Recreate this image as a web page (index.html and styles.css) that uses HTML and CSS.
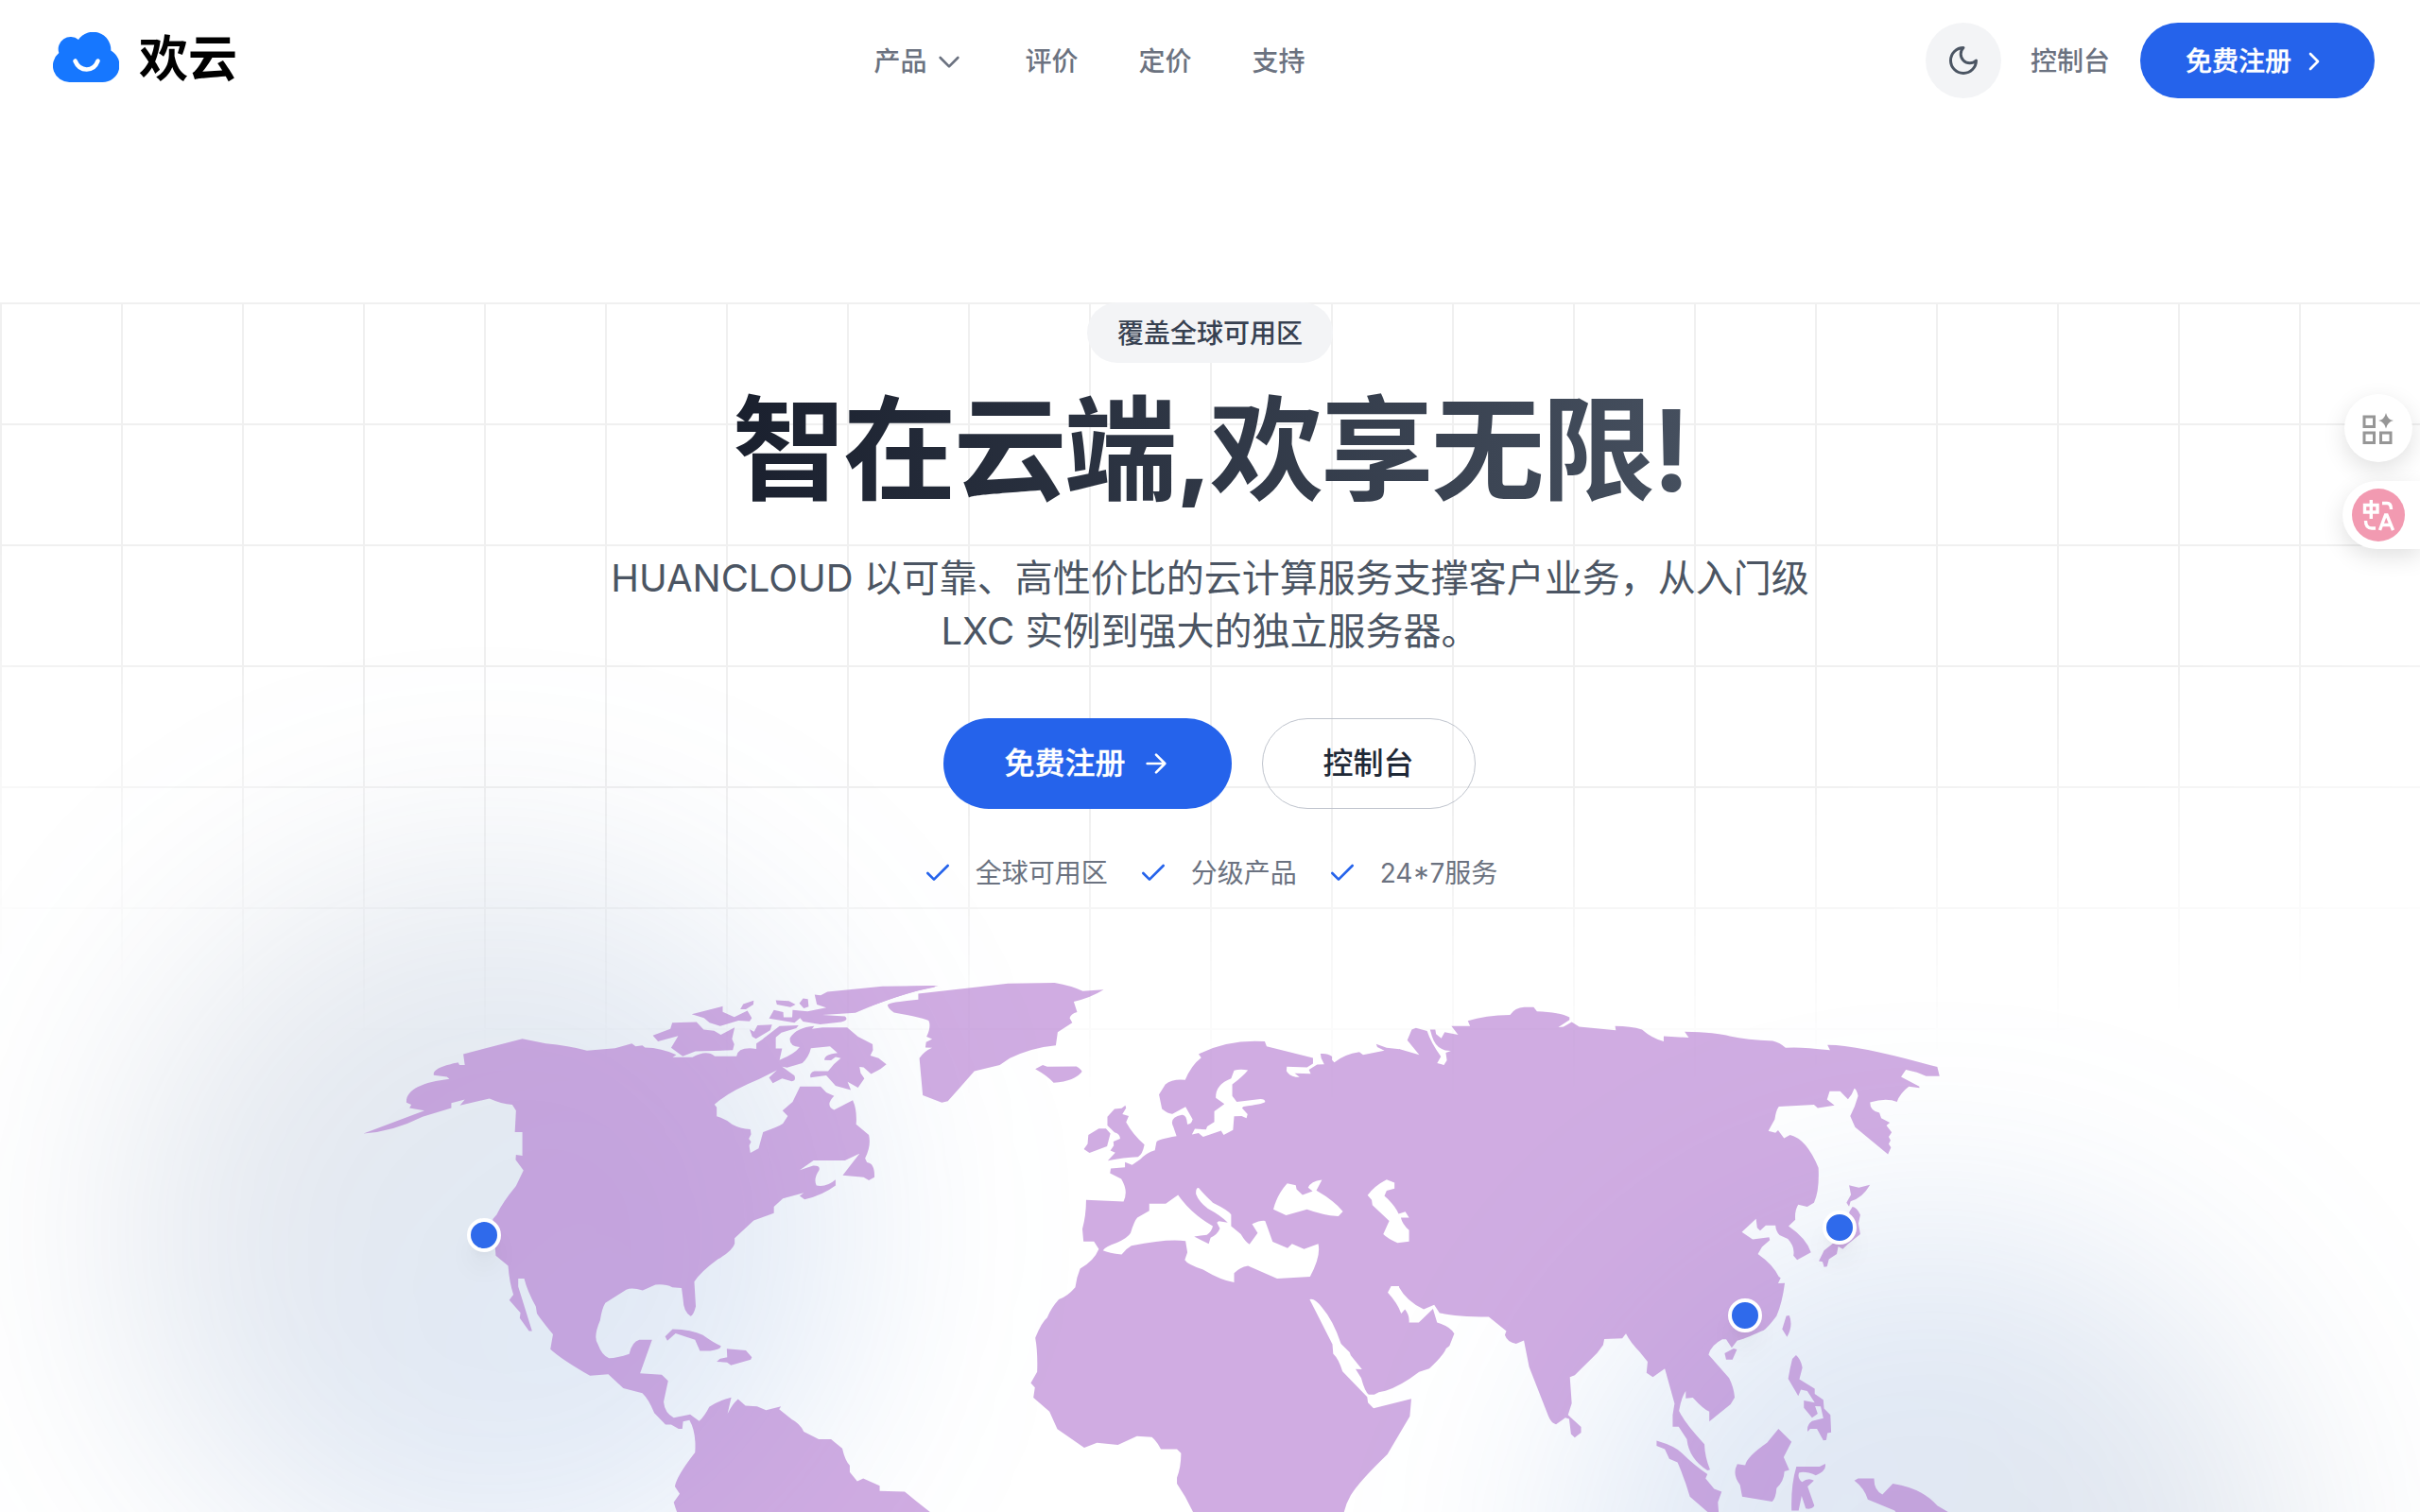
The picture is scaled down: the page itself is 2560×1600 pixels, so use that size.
FILE: index.html
```html
<!DOCTYPE html>
<html lang="zh-CN">
<head>
<meta charset="utf-8">
<title>欢云</title>
<link rel="stylesheet" href="styles.css">
</head>
<body>
<header class="header">
  <a class="brand">
    <svg class="brand-mark" viewBox="0 0 70 53"><path fill="#1677ff" d="M17.500 53A17.500 17.500 0 0 1 6.300 22A13 13 0 0 1 27 8A18.800 18.800 0 0 1 61.300 19.500A17.900 17.900 0 0 1 52.500 53Z"/><path d="M23.500 30.500C28.500 42.500 43 42.500 47.500 30.500" fill="none" stroke="#fff" stroke-width="4.600" stroke-linecap="round"/></svg>
    <span class="brand-name">欢云</span>
  </a>
  <nav class="nav">
    <a class="nav-link">产品<svg class="icon" viewBox="0 0 24 24"><path d="M19 9l-7 7-7-7"/></svg></a>
    <a class="nav-link">评价</a>
    <a class="nav-link">定价</a>
    <a class="nav-link">支持</a>
  </nav>
  <div class="actions">
    <button class="theme-toggle"><svg class="icon icon-moon" viewBox="0 0 24 24"><path d="M12 3a6 6 0 0 0 9 9 9 9 0 1 1-9-9Z"/></svg></button>
    <a class="nav-link">控制台</a>
    <a class="btn btn-small">免费注册<svg class="icon" viewBox="0 0 24 24"><path d="m9 18 6-6-6-6"/></svg></a>
  </div>
</header>

<main class="hero">
  <div class="grid-lines"></div>
  <div class="glow glow-left"></div>
  <div class="glow glow-right"></div>
  <div class="hero-copy">
    <span class="badge">覆盖全球可用区</span>
    <h1 class="title">智在云端,欢享无限!</h1>
    <p class="subtitle">HUANCLOUD 以可靠、高性价比的云计算服务支撑客户业务，从入门级 LXC 实例到强大的独立服务器。</p>
    <div class="cta">
      <a class="btn btn-large">免费注册<svg class="icon" viewBox="0 0 24 24"><path d="M5 12h14M12 5l7 7-7 7"/></svg></a>
      <a class="btn btn-outline">控制台</a>
    </div>
    <ul class="features">
      <li><svg class="icon" viewBox="0 0 24 24"><path d="M20 6 9 17l-5-5"/></svg>全球可用区</li>
      <li><svg class="icon" viewBox="0 0 24 24"><path d="M20 6 9 17l-5-5"/></svg>分级产品</li>
      <li><svg class="icon" viewBox="0 0 24 24"><path d="M20 6 9 17l-5-5"/></svg>24*7服务</li>
    </ul>
  </div>
  <div class="map">
    <svg class="map-land" viewBox="0 1000 2560 600">
      <!-- Inland seas, cut out of the land -->
      <mask id="seas" maskUnits="userSpaceOnUse" x="0" y="1000" width="2560" height="600">
        <rect x="0" y="1000" width="2560" height="600" fill="#fff"/>
        <g fill="#000" transform="translate(920 1020) scale(.39541 .3699)">
          <path d="M862 488L870 472L900 474L903 465L922 452V422L949 401L926 383Q925 345 967 328L975 305Q990 300 1012 304Q1000 320 970 345V378L982 395L1040 387Q1058 385 1058 395Q1050 402 1000 408L996 412L1011 430L1008 441L995 435L975 436L972 475L947 489L940 477L892 495L880 484Z"/>
          <path d="M624 820Q630 808 660 798Q690 785 698 770Q708 735 716 726L748 706V686H792L825 661Q860 715 918 750Q915 765 902 775L868 780L907 801L912 783Q930 775 937 757L929 740L934 736L958 740Q940 720 905 700Q880 680 873 658Q872 640 880 641Q895 660 918 683Q960 705 967 717V750L993 773Q1005 795 1016 802L1038 770L1023 744Q1045 733 1058 735Q1065 755 1078 795L1118 813L1130 801L1162 816L1200 801Q1208 835 1178 895L1090 900L1012 864Q990 868 975 885V911Q940 905 893 875Q850 860 843 847L850 825L845 793Q800 785 700 806Q685 815 674 831Q640 828 624 820Z"/>
          <path d="M1080 702Q1090 660 1117 628L1140 633L1142 645L1158 661L1185 650L1173 640Q1180 622 1210 618L1195 648Q1240 675 1266 708L1254 722Q1210 718 1170 702L1114 719Z"/>
          <path d="M1332 662Q1350 635 1383 617L1404 626V643L1383 649L1377 664Q1405 690 1415 715L1433 709L1443 726H1421Q1425 745 1443 762V794L1412 798Q1385 785 1374 773L1390 735L1345 690L1343 675Z"/>
        </g>
      </mask>
      <g mask="url(#seas)">
      <!-- Americas -->
      <g transform="translate(360 1020) scale(.39541 .3699)">
        <path d="M62 485L225 420L185 412L190 403L177 397C174 360 220 338 292 329L285 323L250 318C246 298 290 288 315 282L319 289L333 289L329 258L487 214L550 228Q610 234 660 248L735 241L780 228L790 236L808 233L815 239Q860 240 899 260L889 267H942Q980 244 1002 264H1060Q1064 236 1113 243V228L1165 190V242H1182L1175 275Q1215 258 1229 238Q1200 235 1203 212Q1220 182 1268 178L1262 186L1290 182H1356L1385 208L1424 230L1425 247L1418 262L1440 270L1461 287L1445 301L1420 315L1400 296L1389 295L1392 312L1402 328L1385 354L1357 337L1366 361L1325 349L1300 319L1258 325Q1254 312 1268 307H1305Q1320 285 1339 270L1325 266L1313 276L1295 275Q1295 259 1330 255L1310 236L1259 241Q1254 265 1236 284L1195 297L1182 294L1215 320Q1220 334 1208 336L1182 328L1157 341L1147 325L1168 304L1120 330Q1040 365 1001 402L1007 410V436Q1030 443 1048 459Q1070 472 1097 473L1099 487L1093 500L1099 509L1094 520L1097 541L1119 528L1131 481Q1170 467 1184 457L1197 435L1183 420L1210 395L1230 351H1285L1300 368L1321 378Q1296 405 1321 418L1371 390Q1383 418 1380 459L1414 489Q1421 520 1404 556L1409 568Q1430 570 1429 610L1414 619L1400 610L1344 605L1389 543L1350 562H1266L1229 590L1265 577Q1285 576 1281 590Q1265 615 1274 634Q1300 640 1325 617V634Q1290 662 1242 674L1229 664L1240 655L1184 671L1160 695V713L1106 734L1055 785V800Q1050 820 1010 845Q965 880 947 909L951 980Q945 1005 937 1008Q918 995 917 960L913 927L888 925Q870 915 843 918L809 934Q780 925 765 932L709 970Q700 985 695 1020Q675 1070 690 1090Q700 1120 719 1128Q740 1128 773 1116Q780 1080 800 1075H834L802 1171L860 1175L877 1193L865 1253Q868 1285 892 1298L936 1289L960 1308Q975 1293 987 1267Q1010 1250 1046 1240L1036 1287Q1048 1260 1064 1245L1084 1264L1115 1266L1139 1277L1179 1266L1174 1274L1208 1303Q1230 1315 1240 1338L1280 1360H1313L1343 1386Q1350 1420 1363 1435V1454L1383 1480L1399 1472L1443 1493V1508L1510 1510L1540 1536L1580 1570V1620H920Q900 1570 892 1540L908 1516L895 1495Q900 1465 949 1398Q953 1340 934 1305L917 1309L915 1330H905L885 1318H870L840 1285Q825 1245 808 1228L757 1214L717 1174L668 1178Q590 1130 562 1102L569 1060Q535 1015 526 1000L523 980Q500 935 492 900H476V923L513 1050H505L480 1013L482 998L452 962L463 946Q452 910 449 864L416 835L408 730L418 718Q435 680 470 635L490 591L469 560L470 546L487 549V481H467L470 420L460 403Q430 400 399 385L320 405L333 388L297 398V412L220 437Q140 480 62 485Z"/>
        <path d="M836 205L883 186L888 168L953 166L972 188L1000 191L1018 203L1055 182L1048 215L1054 230L1050 247L950 250L916 264L885 240L904 206L850 222ZM940 144L1023 121V137L1054 152L1089 134L1101 155L1095 164L1065 162L1016 178L988 168L973 155ZM1070 130L1078 115L1106 105L1105 116L1085 130ZM1095 187L1107 194L1116 176L1155 174L1150 190L1112 214L1102 208ZM1147 156L1160 132L1185 138L1186 153H1209L1210 132L1250 136L1300 125L1275 116L1269 88L1285 90L1303 80L1450 64L1600 62Q1480 90 1378 140L1290 146L1350 150Q1362 160 1340 166L1284 173L1238 165L1230 155L1215 168ZM1165 104L1200 106L1218 116L1204 124L1168 116ZM1228 113L1238 99L1251 101L1253 122L1240 127ZM1130 215L1175 178L1226 176L1220 184L1180 197L1165 210Z"/>
        <path d="M869 1066L889 1045Q940 1046 970 1062Q1000 1085 1018 1093Q1020 1102 990 1107H962L949 1075L897 1057L875 1078ZM1034 1101L1085 1106L1101 1125L1098 1132L1045 1148L1035 1140L1007 1138L1015 1130L1035 1125Z"/>
      </g>
      <!-- Greenland, Europe and Africa -->
      <g transform="translate(920 1020) scale(.39541 .3699)">
        <path d="M0 68L170 62L175 66Q100 80 0 122Z"/>
        <path d="M48 117Q50 110 130 102V85L370 56L495 54Q540 62 570 78L626 74Q590 98 546 108L555 138Q538 143 535 155L542 168L503 195L498 233Q430 240 375 270L348 289L280 307L209 393L193 397L142 376L133 270Q145 250 167 240L149 239L151 224L167 215L152 208Q165 180 158 163Q150 155 65 139Q48 128 48 117Z"/>
        <path d="M443 301L463 289L475 294L553 293Q565 300 568 308Q550 335 492 340Q475 320 443 301ZM573 530L583 515L585 489L613 471H632L644 485L635 522L588 541ZM637 563L657 540L644 534L653 520L652 508L670 500Q670 487 655 482L636 462V437L655 415L674 413L684 405L686 412L676 430L693 435L686 453Q705 490 735 517Q730 545 718 552Q680 553 637 563Z"/>
        <path d="M1418 244L1383 240L1355 229L1358 238L1377 248L1320 260L1310 252Q1270 258 1243 282L1237 275V265Q1225 255 1206 257L1208 270L1216 287L1197 288L1175 303L1180 314L1137 313L1150 324H1140Q1120 318 1115 306L1116 294L1170 296L1186 285V269L1062 236L1057 222Q960 215 880 258L887 268Q860 290 844 332Q810 328 791 345L774 374L782 415Q800 430 810 429L845 409L864 445Q860 460 850 459Q848 430 835 432Q800 440 812 465L821 493Q770 502 767 510L763 533Q740 540 724 559L702 575L683 567V582L645 585L643 599L673 615Q693 650 679 680L579 675Q579 720 569 758L572 794H600L613 816Q600 850 563 872Q554 895 550 925Q530 950 506 960Q485 985 475 1012Q460 1025 443 1070Q450 1110 448 1167L431 1199L442 1212L438 1241L481 1281L502 1331L574 1384L608 1370L664 1376L715 1351L755 1354Q770 1368 779 1388H822L833 1400Q833 1440 822 1470V1487Q850 1530 870 1580V1620H1262Q1265 1560 1287 1520Q1310 1480 1385 1403L1445 1294L1449 1244L1348 1271L1333 1255L1331 1239L1265 1166Q1255 1130 1240 1115L1238 1088L1177 960Q1190 955 1210 983Q1240 1020 1261 1087L1284 1111L1287 1120L1317 1160L1300 1159L1315 1185Q1325 1225 1335 1232L1350 1232L1362 1225L1380 1221Q1420 1208 1470 1167L1497 1158Q1535 1120 1542 1100L1551 1093L1564 1058Q1555 1038 1518 1026L1507 987L1469 1026H1443Q1445 1005 1432 988L1422 1000Q1412 970 1386 940L1395 922H1418Z"/>
      </g>
      <!-- Asia -->
      <g transform="translate(1480 1020) scale(.39541 .3699)">
        <path d="M0 243L54 260L22 218L34 188L45 183L75 192Q85 225 112 265L102 284L120 289L128 276L125 254L139 249Q100 250 88 207L83 188H97L99 201L113 213L122 195L158 203L140 178H190L184 163Q230 147 297 146Q310 125 335 124H360L369 136Q430 138 456 153V160L426 181L440 180L462 166L482 180L580 190L578 178Q620 178 650 188Q675 212 708 222V207L775 211L764 194Q850 196 885 207Q930 218 1000 220Q1020 225 1034 240Q1070 236 1153 247L1146 232Q1220 230 1440 295L1446 321H1410L1385 310L1356 303L1343 323L1392 351V355L1364 351Q1340 370 1332 395Q1305 382 1260 396Q1260 420 1285 426L1290 441L1313 454L1304 462L1318 482L1310 495L1315 505L1310 515L1316 525L1308 545L1220 467L1207 435Q1220 410 1228 378Q1225 360 1218 356Q1212 375 1201 387L1180 364H1152L1145 388L1165 405L1120 412L1110 403L1016 408Q1008 420 1005 445L988 478L1007 483L1014 476L1030 499L1046 489Q1090 500 1122 583Q1125 650 1110 683L1092 695L1068 689Q1058 705 1060 732L1042 750Q1090 785 1102 825L1065 847L1055 835Q1060 810 1040 787L1018 776Q1008 765 1007 748H981L966 763L958 755L955 729L917 767L946 788L990 782L992 790L971 810L960 830Q1000 860 1016 895L1021 898L1014 914L1032 913Q1025 970 1010 1007Q980 1050 970 1050Q920 1075 905 1077L890 1098L875 1074H865Q835 1090 828 1118L883 1185Q895 1210 898 1240L887 1260L830 1309V1281Q815 1275 786 1241L767 1243V1222Q755 1240 749 1279Q765 1315 817 1374Q818 1410 832 1447L825 1449Q775 1415 770 1360L748 1324H732V1290L737 1258L711 1158L679 1182L662 1170L665 1138L643 1109Q620 1085 607 1058L597 1071L549 1073L546 1090L530 1113L470 1177L457 1182L462 1257L452 1290L487 1325V1341L470 1355L460 1345L455 1302L445 1298L420 1317Q408 1315 400 1295L348 1153L334 1077L313 1087Q290 1083 283 1062L287 1050L240 1010Q150 1010 108 998L94 975L66 988Q20 965 0 925Z"/>
        <path d="M871 1114L895 1100L904 1103L892 1132H875ZM1036 1007L1044 1006Q1055 1035 1038 1067L1025 1045ZM1204 633L1230 640L1260 632Q1240 670 1208 679L1204 694L1197 683L1209 660ZM1204 710L1213 695Q1225 697 1234 718L1229 743L1234 773L1200 802L1187 816L1175 808L1171 830L1150 845L1145 866L1137 867L1133 852L1123 850L1137 820L1160 800L1187 795L1215 770ZM1052 1130L1062 1119Q1075 1130 1079 1155L1071 1188L1112 1215V1230L1135 1247L1137 1272L1154 1290L1156 1340L1146 1342L1143 1362L1135 1363L1118 1330L1100 1330L1093 1338Q1090 1318 1105 1308L1135 1300L1128 1266L1113 1265L1120 1287L1105 1298L1083 1270V1249L1112 1255L1092 1222L1075 1218L1068 1236L1041 1187Q1045 1160 1052 1130Z"/>
        <path d="M689 1364Q740 1380 757 1400Q790 1435 825 1460L820 1472L843 1502L863 1510L853 1540L855 1568L860 1600L778 1524Q765 1475 745 1426L723 1416L711 1388L689 1379ZM1015 1330L1050 1367L1029 1411L1044 1448L1031 1452Q1030 1480 1010 1500Q1008 1530 998 1538L918 1524L912 1490Q890 1460 905 1431L926 1434Q930 1410 985 1369ZM1063 1438H1125L1140 1430Q1145 1450 1115 1463Q1085 1450 1070 1456Q1065 1470 1078 1482Q1095 1468 1110 1478L1093 1495L1111 1550Q1105 1562 1088 1558L1077 1522L1069 1564H1050Q1048 1490 1063 1438ZM1218 1478L1228 1472H1271Q1270 1505 1293 1518L1321 1487Q1400 1500 1440 1550L1480 1575V1600H1350L1326 1564L1254 1532Q1245 1500 1218 1478Z"/>
      </g>
      </g>
    </svg>
    <i class="pin pin-us"></i>
    <i class="pin pin-jp"></i>
    <i class="pin pin-cn"></i>
  </div>
</main>

<aside class="side-tools">
  <button class="tool tool-apps"><svg width="34" height="34" viewBox="0 0 34 34"><g fill="none" stroke="#969696" stroke-width="3"><rect x="2" y="5" width="10.500" height="10.500"/><rect x="2" y="22" width="10.500" height="10.500"/><rect x="19.500" y="22" width="10.500" height="10.500"/></g><path fill="#969696" d="M25 1Q26.500 8 33 9Q26.500 10.500 25 17.500Q23.500 10.500 17 9Q23.500 8 25 1Z"/></svg></button>
  <button class="tool tool-translate"><span class="tool-disc"><svg width="34" height="34" viewBox="0 0 34 34"><g fill="none" stroke="#fff" stroke-width="3.400"><path d="M2.500 6.500H16V14H2.500ZM9.300 1V21M21 4.500H26Q30.500 4.500 30.500 11M3.500 23Q3.500 31 10 31H14"/><path d="M18.500 33L24.500 17H26L32.500 33M21 27.500H30"/></g></svg></span></button>
</aside>
</body>
</html>
```
FILE: styles.css
```css
* { box-sizing: border-box; }
body {
  margin: 0;
  width: 2560px;
  height: 1600px;
  overflow: hidden;
  position: relative;
  background: #fff;
  font-family: Inter, "Noto Sans CJK SC", sans-serif;
  color: #1f2937;
}
button { border: 0; padding: 0; font: inherit; }

.header {
  height: 128px;
  padding: 0 48px 0 56px;
  display: flex;
  justify-content: space-between;
  align-items: center;
}
.brand { display: flex; align-items: center; gap: 21px; width: 212px; height: 128px; padding-bottom: 7px; }
.brand-mark { width: 70px; height: 53px; }
.brand-name { padding-top: 4px; font-size: 52px; line-height: 64px; font-weight: 700; color: #000; }
.nav { display: flex; gap: 64px; }
.nav-link {
  display: flex;
  align-items: center;
  gap: 8px;
  padding-top: 2px;
  font-size: 28px;
  line-height: 40px;
  font-weight: 500;
  color: #6b7280;
}
.icon {
  width: 32px;
  height: 32px;
  fill: none;
  stroke: currentColor;
  stroke-width: 2;
  stroke-linecap: round;
  stroke-linejoin: round;
}
.actions { display: flex; justify-content: flex-end; align-items: center; gap: 32px; }
.theme-toggle {
  width: 80px;
  height: 80px;
  margin-right: -1px;
  border-radius: 50%;
  background: #f3f4f6;
  color: #4b5563;
  display: grid;
  place-items: center;
}
.icon-moon { width: 36px; height: 36px; }
.btn {
  display: flex;
  align-items: center;
  border-radius: 999px;
  background: #2563eb;
  color: #fff;
  font-weight: 500;
}
.btn-small { height: 80px; padding: 1px 48px 0; gap: 8px; font-size: 28px; line-height: 40px; -webkit-text-stroke: .3px #fff; }
.btn-large { height: 96px; padding: 0 64px; gap: 16px; font-size: 32px; line-height: 48px; -webkit-text-stroke: .3px #fff; }
.btn-outline {
  height: 96px;
  padding: 0 64px;
  font-size: 32px;
  line-height: 48px;
  border: 1px solid #bfc4cd;
  background: transparent;
  color: #1f2937;
}

.hero { position: relative; height: 1472px; padding-top: 192px; overflow: hidden; }
.grid-lines {
  position: absolute;
  inset: 192px 0 0;
  background-image:
    linear-gradient(to right, #f0f0f0 2px, transparent 2px),
    linear-gradient(to bottom, #f0f0f0 2px, transparent 2px);
  background-size: 128px 128px;
  mask-image: radial-gradient(ellipse 2048px 775px at 50% 0, #000 70%, transparent 110%);
}
.glow { position: absolute; border-radius: 50%; filter: blur(120px); }
.glow-left {
  left: 128px;
  top: 784px;
  width: 768px;
  height: 768px;
  background: linear-gradient(to bottom right, rgba(71, 85, 105, .13), rgba(59, 125, 225, .17));
}
.glow-right {
  left: 1664px;
  top: 1164px;
  width: 768px;
  height: 768px;
  background: linear-gradient(to top left, rgba(71, 85, 105, .15), rgba(59, 125, 225, .17));
}

.hero-copy { position: relative; display: flex; flex-direction: column; align-items: center; }
.badge {
  height: 64px;
  line-height: 64px;
  padding: 1px 32px 0;
  border-radius: 32px;
  background: #f3f4f6;
  font-size: 28px;
  font-weight: 500;
  color: #374151;
}
.title {
  margin: 32px 0 47px;
  padding-top: 1px;
  font-size: 120px;
  line-height: 120px;
  font-weight: 700;
  letter-spacing: -3px;
  background: linear-gradient(to right, #1a202e, #454f5e);
  -webkit-background-clip: text;
  background-clip: text;
  color: transparent;
}
.subtitle {
  margin: 0 0 64px;
  width: 1280px;
  text-align: center;
  font-size: 40px;
  line-height: 56px;
  color: #4b5563;
}
.cta { display: flex; gap: 32px; margin-left: -1px; }
.features {
  list-style: none;
  margin: 48px 0 0;
  padding: 0;
  display: flex;
  gap: 32px;
  font-size: 28px;
  line-height: 40px;
  color: #6b7280;
}
.features li { display: flex; align-items: center; gap: 24px; }
.features .icon { color: #2563eb; }

.map { position: relative; margin-top: 56px; height: 600px; overflow: hidden; }
.map-land { display: block; width: 2560px; height: 600px; fill: #b176cf; opacity: .6; }
.pin {
  position: absolute;
  width: 36px;
  height: 36px;
  border: 4px solid #fff;
  border-radius: 50%;
  background: #2f6aeb;
  box-shadow: 0 20px 30px -6px rgba(0, 0, 0, .08), 0 8px 12px -8px rgba(0, 0, 0, .08);
}
.pin-us { left: 494px; top: 289px; }
.pin-jp { left: 1928px; top: 281px; }
.pin-cn { left: 1828px; top: 374px; }

.side-tools {
  position: absolute;
  top: 417px;
  right: 0;
  display: flex;
  flex-direction: column;
  align-items: flex-end;
  gap: 20px;
}
.tool { height: 72px; background: #fff; display: flex; align-items: center; box-shadow: 0 8px 24px rgba(0, 0, 0, .12); }
.tool-apps { width: 72px; border-radius: 50%; margin-right: 8px; justify-content: center; }
.tool-translate { width: 82px; padding-left: 10px; border-radius: 36px 0 0 36px; }
.tool-disc { width: 56px; height: 56px; border-radius: 50%; background: #f29ab1; display: grid; place-items: center; }
```
